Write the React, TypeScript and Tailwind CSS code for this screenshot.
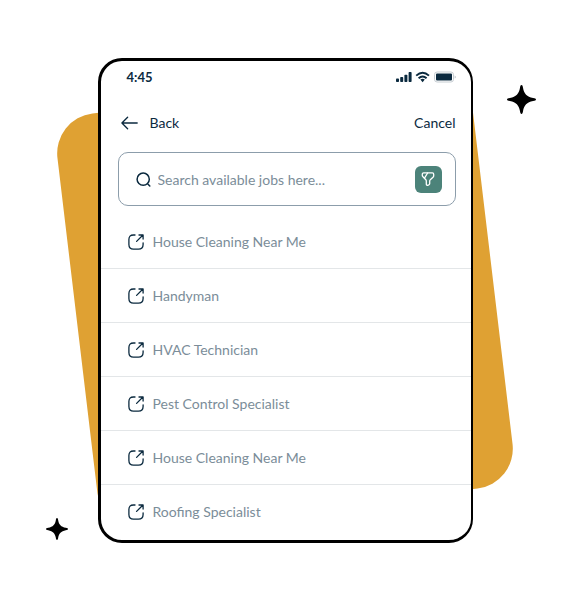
import React from "react";

const jobs: string[] = [
  "House Cleaning Near Me",
  "Handyman",
  "HVAC Technician",
  "Pest Control Specialist",
  "House Cleaning Near Me",
  "Roofing Specialist",
];

function Sparkle({ className }: { className: string }) {
  return (
    <svg viewBox="0 0 30 30" className={className} fill="#000" aria-hidden="true">
      <path d="M15 0 C16 0 16.3 1.2 16.6 3 C17.6 9 20.5 12 27 13.4 C29 13.9 30 14 30 15 C30 16 29 16.1 27 16.6 C20.5 18 17.6 21 16.6 27 C16.3 28.8 16 30 15 30 C14 30 13.7 28.8 13.4 27 C12.4 21 9.5 18 3 16.6 C1 16.1 0 16 0 15 C0 14 1 13.9 3 13.4 C9.5 12 12.4 9 13.4 3 C13.7 1.2 14 0 15 0 Z" />
    </svg>
  );
}

function OpenIcon() {
  return (
    <svg viewBox="0 0 16 16" className="size-4 shrink-0" fill="none" stroke="#0b2a3f" strokeWidth="1.3" strokeLinecap="round" strokeLinejoin="round" aria-hidden="true">
      <path d="M7 1 H5.5 C2.3 1 0.9 2.4 0.9 5.6 V10.4 C0.9 13.6 2.3 15.1 5.5 15.1 H10.4 C13.6 15.1 15.1 13.6 15.1 10.4 V8.8" />
      <path d="M8.6 7.4 L14.7 1.3 M11 1 H15.1 V5" />
    </svg>
  );
}

function StatusIcons() {
  return (
    <svg viewBox="0 0 60 12" className="h-3 w-15" aria-hidden="true">
      <g fill="#0b2a3f">
        <rect x="0" y="7.6" width="3" height="3.4" rx="0.8" />
        <rect x="4.2" y="6" width="3" height="5" rx="0.8" />
        <rect x="8.4" y="3.8" width="3" height="7.2" rx="0.8" />
        <rect x="12.6" y="1" width="3" height="10" rx="0.8" />
        <path d="M24.4 8.6 Q26.6 7 28.8 8.6 L26.6 11.2 Z" />
      </g>
      <g fill="none" stroke="#0b2a3f" strokeWidth="1.9">
        <path d="M20.2 4.6 Q26.6 -1.2 33 4.6" />
        <path d="M22.6 7.2 Q26.6 3.6 30.6 7.2" />
      </g>
      <rect x="38.5" y="1" width="19" height="10" rx="2.6" fill="#fff" stroke="#c6cdd2" />
      <rect x="40" y="2.5" width="16" height="7" rx="1" fill="#0b2a3f" />
      <path d="M58.6 4.4 Q60 5 60 6 Q60 7 58.6 7.6 Z" fill="#c6cdd2" />
    </svg>
  );
}

export default function App() {
  return (
    <main className="flex min-h-screen items-center justify-center overflow-hidden bg-white px-6 pt-[58px] pb-[57px] font-['Lato','Noto_Sans',sans-serif] text-sm leading-5 text-[#0b2a3f]">
      <div className="relative w-full max-w-[375px]">
        <div className="absolute top-1/2 left-1/2 size-[418px] -translate-1/2 rotate-[-6.8deg] rounded-[40px] bg-[#dfa133]" />
        <Sparkle className="absolute -right-[63px] top-[27px] size-[29px]" />
        <Sparkle className="absolute -left-[52px] bottom-[3px] size-[22px]" />

        <section className="relative overflow-hidden rounded-[24px] border-3 border-r-2 border-black bg-white">
          <div className="flex h-8 items-center justify-between pr-[15px] pl-[26px]">
            <span className="text-[13px] font-bold">4:45</span>
            <StatusIcons />
          </div>

          <nav className="flex h-[59px] items-center justify-between pr-[15px] pl-5">
            <button type="button" className="flex items-center gap-3">
              <svg viewBox="0 0 17 14" className="h-3.5 w-[17px]" fill="none" stroke="#0b2a3f" strokeWidth="1.3" strokeLinecap="round" strokeLinejoin="round" aria-hidden="true">
                <path d="M16.2 7 H0.9 M6.6 1.2 L0.9 7 L6.6 12.8" />
              </svg>
              Back
            </button>
            <button type="button">Cancel</button>
          </nav>

          <form className="mr-[15px] mb-[9px] ml-[17px] flex h-[54px] items-center rounded-[10px] border border-[#8c9dab] pr-[13px] pl-[17px]">
            <label htmlFor="job-search" className="shrink-0">
              <svg viewBox="0 0 15 15" className="size-[15px]" fill="none" stroke="#0b2a3f" strokeWidth="1.5" strokeLinecap="round" role="img" aria-label="Search jobs">
                <circle cx="7.2" cy="7.2" r="6.1" />
                <path d="M12 12.2 L13.8 14" />
              </svg>
            </label>
            <input
              id="job-search"
              type="text"
              placeholder="Search available jobs here..."
              className="ml-[7px] h-10 min-w-0 flex-1 bg-transparent outline-none placeholder:text-[#7b8d99]"
            />
            <button type="button" aria-label="Filter jobs" className="flex size-[27px] shrink-0 items-center justify-center rounded-md bg-[#4c837a]">
              <svg viewBox="0 0 14 14" className="size-3.5" fill="none" stroke="#fff" strokeWidth="1.3" strokeLinecap="round" strokeLinejoin="round" aria-hidden="true">
                <path d="M2.6 0.9 H11.4 C12.1 0.9 12.7 1.5 12.7 2.2 V3.7 C12.7 4.2 12.4 4.9 12 5.2 L9.3 7.7 C8.9 8 8.7 8.6 8.7 9.1 V11.5 C8.7 12 8.4 12.5 8 12.7 L7.1 13.2 C6.3 13.6 5.3 13.1 5.3 12.2 V9 C5.3 8.6 5.1 8 4.8 7.7 L2 4.8 C1.6 4.5 1.3 3.9 1.3 3.5 V2.2 C1.3 1.5 1.9 0.9 2.6 0.9 Z" />
                <path d="M6.6 1 L3.5 6.1" />
              </svg>
            </button>
          </form>

          <ul className="pb-px">
            {jobs.map((job, index) => (
              <li key={index} className="border-b border-[#e3e6e8] last:border-transparent">
                <a href="#" className="flex h-[53px] items-center gap-[9px] pl-[27px] text-[#7b8d99]">
                  <OpenIcon />
                  {job}
                </a>
              </li>
            ))}
          </ul>
        </section>
      </div>
    </main>
  );
}
